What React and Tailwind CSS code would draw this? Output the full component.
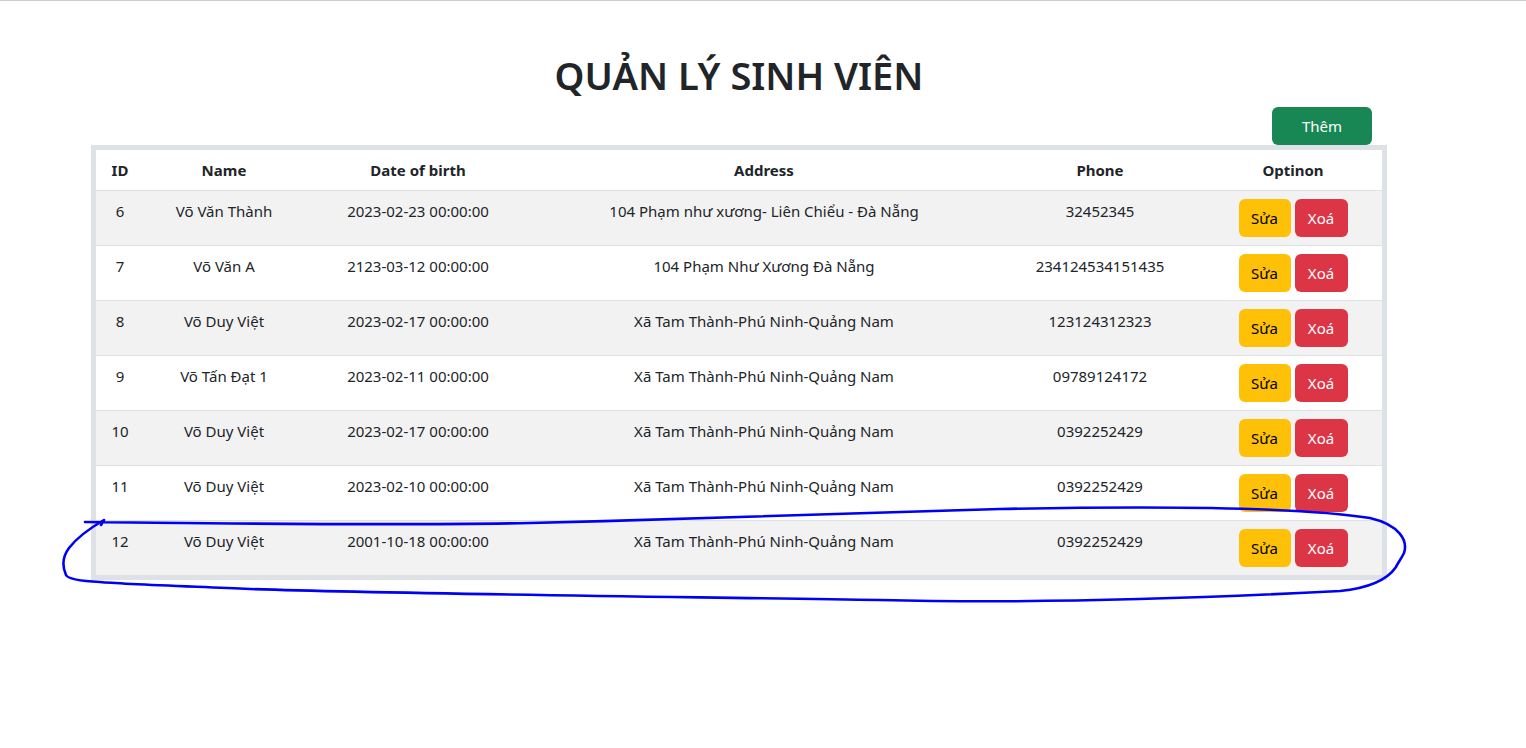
import React from "react";

const rows = [
  ["6", "Võ Văn Thành", "2023-02-23 00:00:00", "104 Phạm như xương- Liên Chiểu - Đà Nẵng", "32452345"],
  ["7", "Võ Văn A", "2123-03-12 00:00:00", "104 Phạm Như Xương Đà Nẵng", "234124534151435"],
  ["8", "Võ Duy Việt", "2023-02-17 00:00:00", "Xã Tam Thành-Phú Ninh-Quảng Nam", "123124312323"],
  ["9", "Võ Tấn Đạt 1", "2023-02-11 00:00:00", "Xã Tam Thành-Phú Ninh-Quảng Nam", "09789124172"],
  ["10", "Võ Duy Việt", "2023-02-17 00:00:00", "Xã Tam Thành-Phú Ninh-Quảng Nam", "0392252429"],
  ["11", "Võ Duy Việt", "2023-02-10 00:00:00", "Xã Tam Thành-Phú Ninh-Quảng Nam", "0392252429"],
  ["12", "Võ Duy Việt", "2001-10-18 00:00:00", "Xã Tam Thành-Phú Ninh-Quảng Nam", "0392252429"],
];

export default function App() {
  return (
    <div
      className="relative min-h-[748px] w-[1526px] border-t border-[#cccccc] bg-white text-[#212529]"
      style={{ fontFamily: '"Noto Sans", "Open Sans", sans-serif' }}
    >
      <div className="ml-[91px] w-[1296px]">
        <h1 className="pt-[50px] text-center text-[38px] font-semibold leading-[48px]">
          QUẢN LÝ SINH VIÊN
        </h1>
        <div className="mt-[8px] flex justify-end pr-[15px]">
          <button className="h-[38px] w-[100px] rounded-[6px] bg-[#198754] text-[15px] text-white">
            Thêm
          </button>
        </div>
        <div className="border-[5px] border-[#dee2e6]">
          <table className="w-full table-fixed border-collapse text-center text-[15px] leading-[24px]">
            <colgroup>
              <col className="w-[48px]" />
              <col className="w-[160px]" />
              <col className="w-[228px]" />
              <col className="w-[464px]" />
              <col className="w-[208px]" />
              <col className="w-[178px]" />
            </colgroup>
            <thead>
              <tr className="border-b border-[#dee2e6] bg-white">
                {["ID", "Name", "Date of birth", "Address", "Phone", "Optinon"].map((h) => (
                  <th key={h} className="h-[40px] px-2 pb-[7px] pt-[8px] align-top font-bold">
                    {h}
                  </th>
                ))}
              </tr>
            </thead>
            <tbody>
              {rows.map((r, i) => (
                <tr
                  key={r[0]}
                  className={
                    (i % 2 === 0 ? "bg-[#f2f2f2] " : "bg-white ") +
                    (i < rows.length - 1 ? "border-b border-[#dee2e6]" : "")
                  }
                >
                  {r.map((c, j) => (
                    <td key={j} className="px-2 pb-2 pt-2 align-top">
                      {c}
                    </td>
                  ))}
                  <td className="px-2 py-2 align-top">
                    <div className="flex justify-center gap-[4px]">
                      <button className="h-[38px] w-[52px] rounded-[6px] bg-[#ffc107] text-[15px] text-black">
                        Sửa
                      </button>
                      <button className="h-[38px] w-[53px] rounded-[6px] bg-[#dc3545] text-[15px] text-white">
                        Xoá
                      </button>
                    </div>
                  </td>
                </tr>
              ))}
            </tbody>
          </table>
        </div>
      </div>
      <svg
        className="pointer-events-none absolute left-0 top-0"
        width="1526"
        height="748"
        viewBox="0 0 1526 748"
      >
        <path
          d="M85 521 C200 522 380 525 530 522 C700 518 880 511 1000 508 C1150 505 1300 506 1370 517 C1400 524 1408 540 1404 552 C1400 560 1397 563 1396 566 C1385 582 1360 588 1340 590 C1150 600 1000 602 880 599 C700 596 400 593 250 588 C180 585 120 583 100 581 C80 580 68 578 66 574 C62 565 63 555 69 547 C78 535 92 526 104 519 L101 524"
          fill="none"
          stroke="#0000f5"
          strokeWidth="2.6"
          strokeLinecap="round"
          strokeLinejoin="round"
        />
      </svg>
    </div>
  );
}
